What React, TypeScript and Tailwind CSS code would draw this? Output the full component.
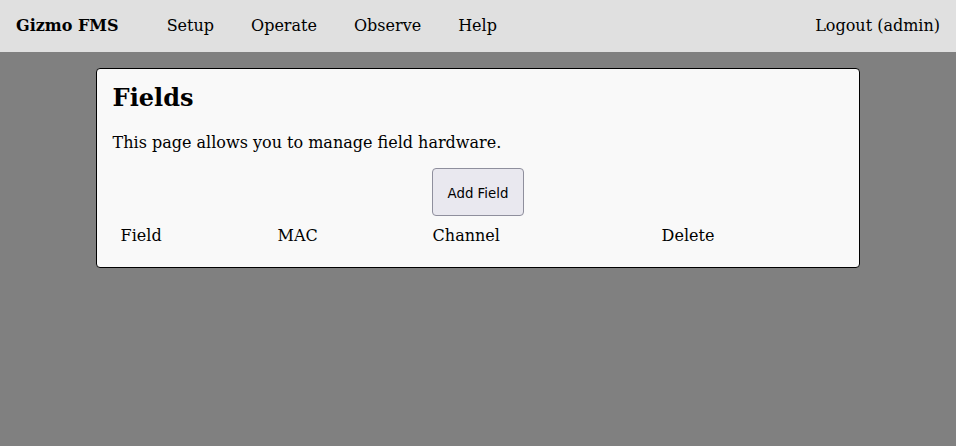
const NAV = ["Setup", "Operate", "Observe", "Help"];

const COLUMNS = [
  { label: "Field", width: "w-[157px]" },
  { label: "MAC", width: "w-[155px]" },
  { label: "Channel", width: "w-[229px]" },
  { label: "Delete", width: "" },
];

export default function App() {
  return (
    <div className="min-h-[446px] bg-[#808080] font-['DejaVu_Serif',serif] text-black text-base">
      {/* Top bar */}
      <nav className="h-[52px] bg-[#e0e0e0] flex items-center pl-4 pr-4">
        <span className="font-bold mr-[48px]">Gizmo FMS</span>
        <div className="flex gap-[37px]">
          {NAV.map((item) => (
            <span key={item}>{item}</span>
          ))}
        </div>
        <span className="ml-auto">Logout (admin)</span>
      </nav>

      {/* Card */}
      <div className="w-[80%] mx-auto mt-4 bg-[#f9f9f9] border border-black rounded-[4px] px-4 pt-[15px] pb-[15px]">
        <h1 className="text-2xl font-bold leading-[28px]">Fields</h1>
        <p className="mt-[19px] leading-6">
          This page allows you to manage field hardware.
        </p>
        <div className="flex justify-center mt-[13px]">
          <button className="w-[92px] h-[48px] pt-[3px] bg-[#e9e8ef] border border-[#8f8f9d] rounded-[4px] font-['DejaVu_Sans',sans-serif] text-[13.333px]">
            Add Field
          </button>
        </div>
        <table className="w-full">
          <thead>
            <tr>
              {COLUMNS.map((col) => (
                <th
                  key={col.label}
                  className={`${col.width} text-left font-normal px-2 pt-2 pb-1 leading-6`}
                >
                  {col.label}
                </th>
              ))}
            </tr>
          </thead>
        </table>
      </div>
    </div>
  );
}
